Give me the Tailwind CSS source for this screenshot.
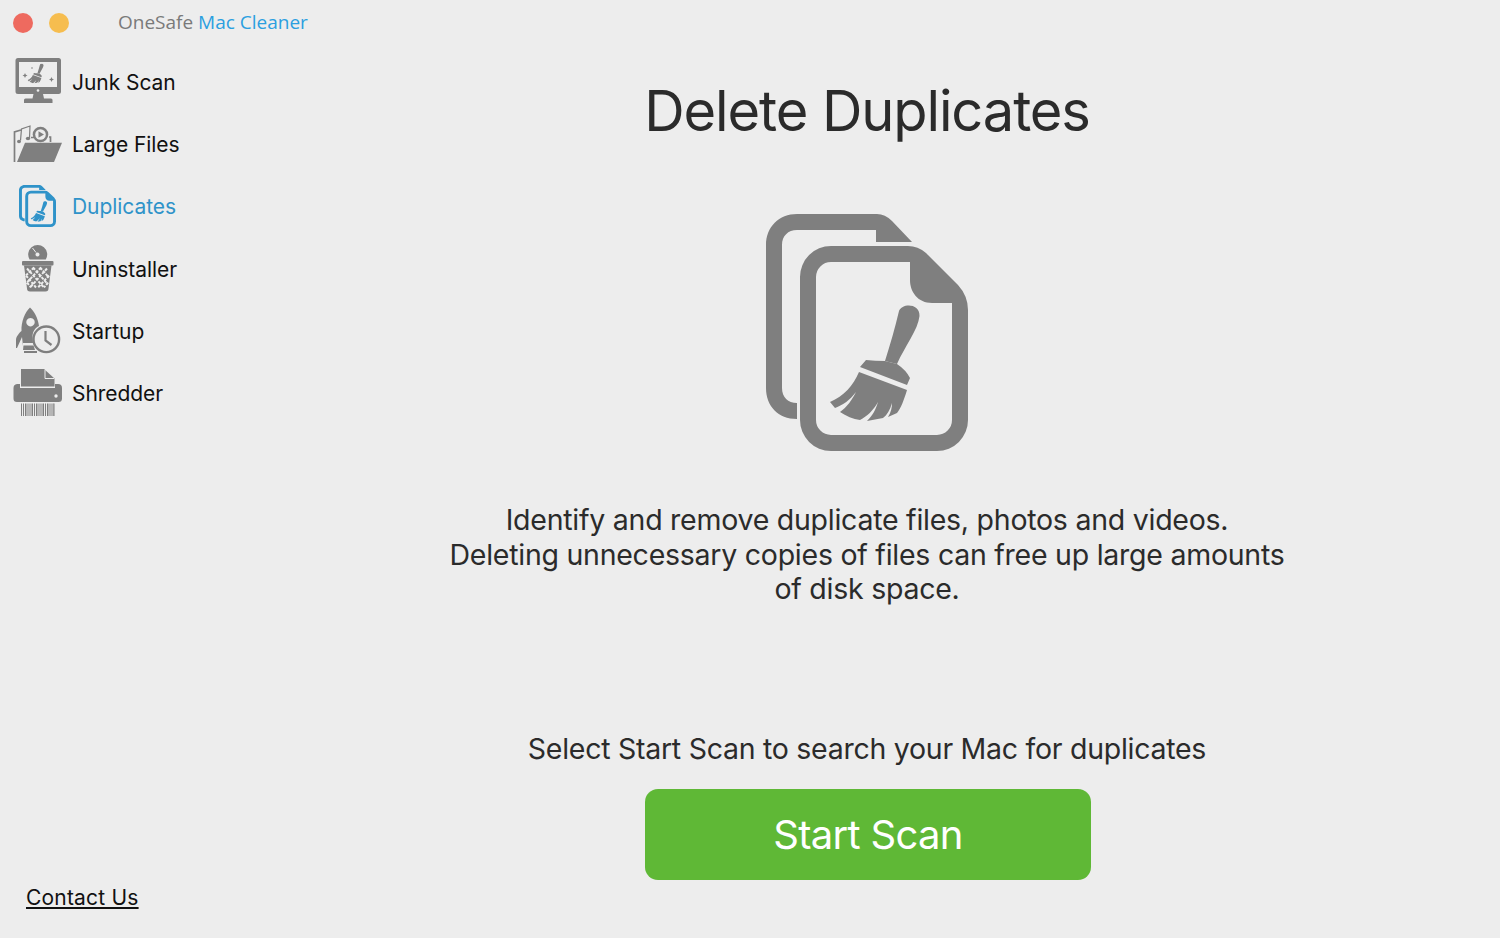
<!doctype html>
<html lang="en">
<head>
<meta charset="utf-8">
<title>OneSafe Mac Cleaner</title>
<script src="https://cdn.jsdelivr.net/npm/@tailwindcss/browser@4"></script>
</head>
<body class="w-[1500px] h-[938px] overflow-hidden bg-[#ededed] font-['Inter','Liberation_Sans',sans-serif] flex">
<aside class="w-[234px] h-full flex flex-col shrink-0">
  <header class="h-[51.5px] flex items-start pl-[13px] pt-[13px]">
    <span class="w-5 h-5 shrink-0 rounded-full bg-[#ee6a5f]"></span>
    <span class="w-5 h-5 shrink-0 rounded-full bg-[#f6bd4f] ml-4"></span>
    <span class="ml-[49px] -mt-[5px] shrink-0 whitespace-nowrap font-['Open_Sans',sans-serif] text-[19px] leading-7 text-[#7a7a7a]">OneSafe <span class="text-[#2b9fe0]">Mac Cleaner</span></span>
  </header>
  <nav class="flex flex-col text-[21px] tracking-[-0.05px] text-[#111]">
    <a class="h-[62.3px] flex items-center pl-3">
      <svg class="w-[60px] h-[50px] shrink-0" viewBox="12 57 60 50" fill="#7f7f7f">
        <path fill-rule="evenodd" d="M18 57H58.500A2.500 2.500 0 0 1 61 59.500V90.500A2.500 2.500 0 0 1 58.500 93H18A2.500 2.500 0 0 1 15.500 90.500V59.500A2.500 2.500 0 0 1 18 57ZM19 61V86H57V61Z"/>
        <circle cx="38" cy="89.500" r="1.300" fill="#ededed"/>
        <path d="M33.500 93H43L44 97.500H51A1.500 1.500 0 0 1 52.500 99V102H24V99A1.500 1.500 0 0 1 25.500 97.500H32.500Z"/>
        <svg x="27" y="62.500" width="17" height="20" viewBox="826 304 96 118" preserveAspectRatio="none"><path d="M899 311C902 303 920 303 919.500 316C918 330 905 346 897 364L885 361C890 345 895 328 899 311Z"/><path d="M866 360Q875 361 885 361L897 364Q906 370 910 378L907 385L860 367Z"/><path d="M859 372L907 390C904 400 901 408 897 413L888 417C891 412 892 408 892 403C890 410 887 415 883 418L867 421C873 415 876 409 878 402C873 411 867 416 860 420C853 419 846 416 840 412C847 407 852 400 856 392C850 400 843 405 835 408L830 402C844 396 853 386 859 372Z"/></svg>
        <path d="M25 72l.800 1.700 1.700.800-1.700.800-.800 1.700-.800-1.700-1.700-.800 1.700-.800ZM51.500 76l.800 1.700 1.700.800-1.700.800-.800 1.700-.800-1.700-1.700-.800 1.700-.800Z"/>
        <circle cx="32" cy="67" r=".800"/>
      </svg>
      <span>Junk Scan</span>
    </a>
    <a class="h-[62.3px] flex items-center pl-3">
      <svg class="w-[60px] h-[50px] shrink-0" viewBox="12 119 60 50" fill="#7f7f7f">
        <path d="M25 141.700H62L54 161H17Z"/>
        <path fill="none" stroke="#7f7f7f" stroke-width="1.700" d="M14.500 161V131L21 129M49 136H50.500V141"/>
        <path fill="none" stroke="#7f7f7f" stroke-width="1.200" d="M20.500 139.500L21.500 128L30 125L29.500 137"/>
        <ellipse cx="19" cy="140.500" rx="2" ry="1.700"/><ellipse cx="28" cy="137.500" rx="2.200" ry="1.800"/>
        <circle cx="40.500" cy="133.500" r="7.800"/><circle cx="40.500" cy="133.500" r="5.300" fill="#ededed"/><path d="M38.500 130.300L44 133.500L38.500 136.700Z"/>
        <path d="M31 136.500H34" stroke="#7f7f7f" stroke-width="1.500"/>
      </svg>
      <span>Large Files</span>
    </a>
    <a class="h-[62.3px] flex items-center pl-3 text-[#2f93c9]">
      <svg class="w-[60px] h-[50px] shrink-0" viewBox="12 181 60 50" fill="#2f93c9">
        <svg x="19" y="184" width="37" height="42" viewBox="766 214 202 237" preserveAspectRatio="none">
          <path d="M797 419C778 419 766 406 766 388V245C766 227 779 214 797 214H877Q885 214 892 221L912 242H876V230H797C788 230 782 236 782 245V388C782 397 788 403 797 403Z"/>
          <path fill-rule="evenodd" d="M831 246H908Q918 246 926 253L958 285Q968 296 968 310V420A31 31 0 0 1 937 451H831A31 31 0 0 1 800 420V277A31 31 0 0 1 831 246ZM831 262A15 15 0 0 0 816 277V420A15 15 0 0 0 831 435H937A15 15 0 0 0 952 420V303H932C918 303 910 292 910 280V262Z"/>
          <path d="M899 311C902 303 920 303 919.500 316C918 330 905 346 897 364L885 361C890 345 895 328 899 311Z"/><path d="M866 360Q875 361 885 361L897 364Q906 370 910 378L907 385L860 367Z"/><path d="M859 372L907 390C904 400 901 408 897 413L888 417C891 412 892 408 892 403C890 410 887 415 883 418L867 421C873 415 876 409 878 402C873 411 867 416 860 420C853 419 846 416 840 412C847 407 852 400 856 392C850 400 843 405 835 408L830 402C844 396 853 386 859 372Z"/>
        </svg>
      </svg>
      <span>Duplicates</span>
    </a>
    <a class="h-[62.3px] flex items-center pl-3">
      <svg class="w-[60px] h-[50px] shrink-0" viewBox="12 243.500 60 50" fill="#7f7f7f">
        <path fill-rule="evenodd" d="M29.600 258A9.500 9.500 0 1 1 45.800 258ZM37.500 251A2 2 0 1 0 37.501 251Z"/>
        <path d="M32.500 246.500L36 251" stroke="#ededed" stroke-width="1"/>
        <path d="M23 259.500H52.500A1 1 0 0 1 53.500 260.500V263A1 1 0 0 1 52.500 264H23A1 1 0 0 1 22 263V260.500A1 1 0 0 1 23 259.500Z"/>
        <path d="M24 264H51.500L48.500 287A3 3 0 0 1 45.500 290H30A3 3 0 0 1 27 287Z"/>
        <path fill="none" stroke="#ededed" stroke-width="2" stroke-dasharray="3 1.300" d="M27 267L44 286M33 266L48 283M40 266L49 276M26 274L36 286M27 281L31 286M47 267L30 286M41 266L26 282M34 266L26 274M49 274L38 286M48 281L44 286"/>
      </svg>
      <span>Uninstaller</span>
    </a>
    <a class="h-[62.3px] flex items-center pl-3">
      <svg class="w-[60px] h-[50px] shrink-0" viewBox="12 306 60 50" fill="#7f7f7f">
        <path fill-rule="evenodd" d="M30 306.500C34 310 38 317 39 325C35 327 33 330 32.500 335L33 342H23V345L22 336L17 347H16V339C16 336 19 332 21.500 330C21 321 25 311 30 306.500ZM30.500 317A4.200 4.200 0 1 0 30.501 317Z"/>
        <path d="M23.500 344.500H33.500L35 349H23Z"/><path d="M24 350H37V352H24Z"/>
        <circle cx="46.300" cy="338.300" r="12.800" fill="#ededed" stroke="#7f7f7f" stroke-width="2.400"/>
        <path d="M45.500 330V339.500L51.500 344" fill="none" stroke="#7f7f7f" stroke-width="2.200"/>
      </svg>
      <span>Startup</span>
    </a>
    <a class="h-[62.3px] flex items-center pl-3">
      <svg class="w-[60px] h-[50px] shrink-0" viewBox="12 368.500 60 50" fill="#7f7f7f">
        <path d="M21 368.500H44L54.500 378V386H21Z"/>
        <path d="M45 369.500V378H54" fill="none" stroke="#ededed" stroke-width="1"/>
        <path d="M17 383.500H20V387.500H55V383.500H58A4 4 0 0 1 62 387.500V398A3.500 3.500 0 0 1 58.500 401.500H17A3.500 3.500 0 0 1 13.500 398V387.500A4 4 0 0 1 17 383.500Z"/>
        <circle cx="56" cy="395.500" r="1.700" fill="#ededed"/>
        <path stroke="#7f7f7f" stroke-width="1" d="M21.500 403V415.500M23.500 403V415.500M25.500 403V415.500M27 403V415.500M29 403V415.500M31 403V415.500M32.500 403V415.500M34.500 403V415.500M36.500 403V415.500M38 403V415.500M40 403V415.500M42 403V415.500M43.500 403V415.500M45.500 403V415.500M47.500 403V415.500M49 403V415.500M51 403V415.500M53 403V415.500M54 403V415.500"/>
      </svg>
      <span>Shredder</span>
    </a>
  </nav>
  <a class="mt-auto mb-[26px] ml-[26px] text-[21px] tracking-[0.2px] leading-7 underline text-[#111]">Contact Us</a>
</aside>
<main class="flex-1 flex flex-col items-center text-[#2b2b2b]">
  <h1 class="mt-[78px] text-[56px] leading-[66px] tracking-[-1.1px] font-normal">Delete Duplicates</h1>
  <svg class="mt-[70px] w-[202px] h-[237px] shrink-0" viewBox="766 214 202 237" fill="#7f7f7f">
    <path d="M797 419C778 419 766 406 766 388V245C766 227 779 214 797 214H877Q885 214 892 221L912 242H876V230H797C788 230 782 236 782 245V388C782 397 788 403 797 403Z"/>
    <path fill-rule="evenodd" d="M831 246H908Q918 246 926 253L958 285Q968 296 968 310V420A31 31 0 0 1 937 451H831A31 31 0 0 1 800 420V277A31 31 0 0 1 831 246ZM831 262A15 15 0 0 0 816 277V420A15 15 0 0 0 831 435H937A15 15 0 0 0 952 420V303H932C918 303 910 292 910 280V262Z"/>
    <path d="M899 311C902 303 920 303 919.500 316C918 330 905 346 897 364L885 361C890 345 895 328 899 311Z"/>
    <path d="M866 360Q875 361 885 361L897 364Q906 370 910 378L907 385L860 367Z"/>
    <path d="M859 372L907 390C904 400 901 408 897 413L888 417C891 412 892 408 892 403C890 410 887 415 883 418L867 421C873 415 876 409 878 402C873 411 867 416 860 420C853 419 846 416 840 412C847 407 852 400 856 392C850 400 843 405 835 408L830 402C844 396 853 386 859 372Z"/>
  </svg>
  <p class="mt-[52px] w-[900px] text-center text-[28.5px] tracking-[-0.25px] leading-[34.500px]">Identify and remove duplicate files, photos and videos.<br>Deleting unnecessary copies of files can free up large amounts<br>of disk space.</p>
  <p class="mt-[124px] text-[28.5px] tracking-[-0.27px] leading-[36px] whitespace-nowrap">Select Start Scan to search your Mac for duplicates</p>
  <button class="mt-[22px] ml-[2px] w-[446px] h-[91px] pt-[2px] rounded-[13px] bg-[#5fb836] text-white text-[40px] tracking-[-0.7px] leading-none">Start Scan</button>
</main>
</body>
</html>
